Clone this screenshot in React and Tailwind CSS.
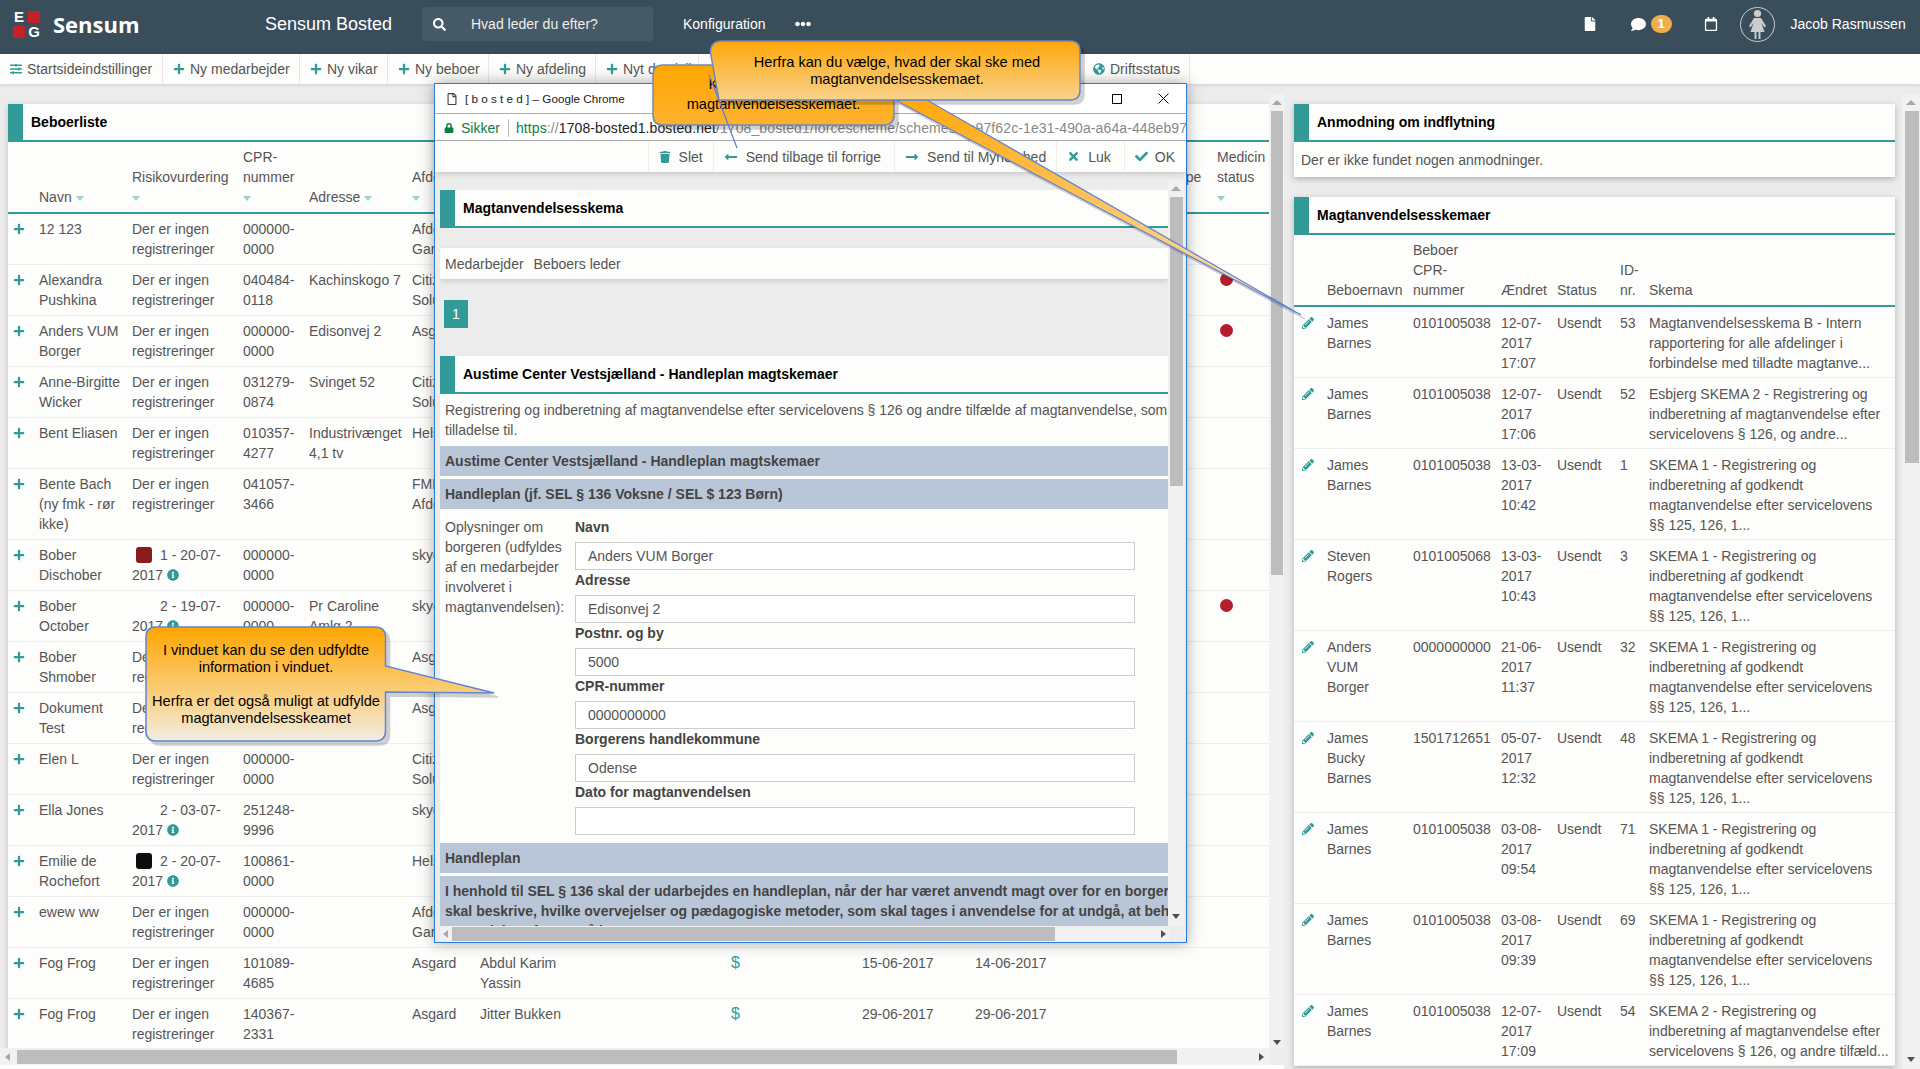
import {
  FaPlus, FaSearch, FaFile, FaComment, FaRegCalendar, FaPencilAlt, FaTrash, FaLongArrowAltLeft,
  FaLongArrowAltRight, FaTimes, FaCheck, FaGlobeAmericas, FaInfoCircle, FaSlidersH,
  FaLock, FaEllipsisH, FaRegFile,
} from 'react-icons/fa';

const NONE = 'Der er ingen registreringer';

const residents = [
  { name: '12 123', risk: NONE, cpr: '000000-0000', addr: '', dep: 'Afdeling Gartneriet' },
  { name: 'Alexandra Pushkina', risk: NONE, cpr: '040484-0118', addr: 'Kachinskogo 7', dep: 'Citizen Solutions', dot: true },
  { name: 'Anders VUM Borger', risk: NONE, cpr: '000000-0000', addr: 'Edisonvej 2', dep: 'Asgard', dot: true },
  { name: 'Anne-Birgitte Wicker', risk: NONE, cpr: '031279-0874', addr: 'Svinget 52', dep: 'Citizen Solutions' },
  { name: 'Bent Eliasen', risk: NONE, cpr: '010357-4277', addr: 'Industrivænget 4,1 tv', dep: 'Helsingør' },
  { name: 'Bente Bach (ny fmk - rør ikke)', risk: NONE, cpr: '041057-3466', addr: '', dep: 'FMK Afdeling' },
  { name: 'Bober Dischober', level: '1 - 20-07-2017', square: 'bg-[#8a1c20]', cpr: '000000-0000', addr: '', dep: 'skyen' },
  { name: 'Bober October', level: '2 - 19-07-2017', square: 'bg-transparent', cpr: '000000-0000', addr: 'Pr Caroline Amlg 2', dep: 'skyen', dot: true },
  { name: 'Bober Shmober', risk: NONE, cpr: '000000-0000', addr: '', dep: 'Asgard' },
  { name: 'Dokument Test', risk: NONE, cpr: '000000-0000', addr: '', dep: 'Asgard' },
  { name: 'Elen L', risk: NONE, cpr: '000000-0000', addr: '', dep: 'Citizen Solutions' },
  { name: 'Ella Jones', level: '2 - 03-07-2017', square: 'bg-transparent', cpr: '251248-9996', addr: '', dep: 'skyen' },
  { name: 'Emilie de Rochefort', level: '2 - 20-07-2017', square: 'bg-[#0c0c0c]', cpr: '100861-0000', addr: '', dep: 'Helsingør' },
  { name: 'ewew ww', risk: NONE, cpr: '000000-0000', addr: '', dep: 'Afdeling Gartneriet' },
  { name: 'Fog Frog', risk: NONE, cpr: '101089-4685', addr: '', dep: 'Asgard', contact: 'Abdul Karim Yassin', from: '15-06-2017', to: '14-06-2017' },
  { name: 'Fog Frog', risk: NONE, cpr: '140367-2331', addr: '', dep: 'Asgard', contact: 'Jitter Bukken', from: '29-06-2017', to: '29-06-2017' },
];

const SKEMA1 = 'SKEMA 1 - Registrering og indberetning af godkendt magtanvendelse efter servicelovens §§ 125, 126, 1...';

const schemes = [
  { name: 'James Barnes', cpr: '0101005038', date: '12-07-2017 17:07', id: 53, text: 'Magtanvendelsesskema B - Intern rapportering for alle afdelinger i forbindelse med tilladte magtanve...' },
  { name: 'James Barnes', cpr: '0101005038', date: '12-07-2017 17:06', id: 52, text: 'Esbjerg SKEMA 2 - Registrering og indberetning af magtanvendelse efter servicelovens § 126, og andre...' },
  { name: 'James Barnes', cpr: '0101005038', date: '13-03-2017 10:42', id: 1, text: SKEMA1 },
  { name: 'Steven Rogers', cpr: '0101005068', date: '13-03-2017 10:43', id: 3, text: SKEMA1 },
  { name: 'Anders VUM Borger', cpr: '0000000000', date: '21-06-2017 11:37', id: 32, text: SKEMA1 },
  { name: 'James Bucky Barnes', cpr: '1501712651', date: '05-07-2017 12:32', id: 48, text: SKEMA1 },
  { name: 'James Barnes', cpr: '0101005038', date: '03-08-2017 09:54', id: 71, text: SKEMA1 },
  { name: 'James Barnes', cpr: '0101005038', date: '03-08-2017 09:39', id: 69, text: SKEMA1 },
  { name: 'James Barnes', cpr: '0101005038', date: '12-07-2017 17:09', id: 54, text: 'SKEMA 2 - Registrering og indberetning af magtanvendelse efter servicelovens § 126, og andre tilfæld...' },
];

const formFields = [
  ['Navn', 'Anders VUM Borger'],
  ['Adresse', 'Edisonvej 2'],
  ['Postnr. og by', '5000'],
  ['CPR-nummer', '0000000000'],
  ['Borgerens handlekommune', 'Odense'],
  ['Dato for magtanvendelsen', ''],
];

function Caret() {
  return <span className="inline-block align-middle w-0 h-0 border-x-[4px] border-x-transparent border-t-[5px] border-t-[#9bcfce]" />;
}

function PanelHead({ title }) {
  return (
    <div className="flex h-[38px] bg-[#fdfdfb] border-b-[2px] border-[#329b98]">
      <div className="w-[15px] h-[38px] bg-[#329b98] shrink-0" />
      <div className="pl-[8px] leading-[36px] font-bold text-black">{title}</div>
    </div>
  );
}

function ToolButton({ icon, children, width }) {
  return (
    <div className={`flex items-center gap-[5px] pl-[10px] h-[30px] border-r border-[#e8e8e6] whitespace-nowrap [&>svg]:shrink-0 ${width}`}>
      {icon}
      <span>{children}</span>
    </div>
  );
}

function ModalButton({ icon, children, className }) {
  return (
    <div className={`flex items-center h-[30px] pl-[10px] border-l border-[#ececea] whitespace-nowrap ${className}`}>
      {icon}
      <span>{children}</span>
    </div>
  );
}

function ScrollV({ thumb, top, className, bottom }) {
  return (
    <div className={`relative flex flex-col bg-[#f1f1f1] ${className}`}>
      <div className={`flex justify-center items-center shrink-0 ${top}`}>
        <span className="w-0 h-0 border-x-[5px] border-x-transparent border-b-[5px] border-b-[#a8a8a8]" />
      </div>
      <div className={`bg-[#bdbdbd] ml-[2px] mr-[1px] ${thumb}`} />
      <div className={`absolute left-0 right-0 flex justify-center ${bottom}`}>
        <span className="w-0 h-0 border-x-[4px] border-x-transparent border-t-[5px] border-t-[#505050]" />
      </div>
    </div>
  );
}

function Callouts() {
  return (
    <div className="absolute left-0 top-0 z-30 w-[1920px] h-[1069px] pointer-events-none text-[14.6px]">
      <svg className="absolute left-0 top-0 w-[1920px] h-[1069px] drop-shadow-[4px_4px_0_rgba(0,0,0,0.18)]" viewBox="0 0 1920 1069">
        <defs>
          <linearGradient id="c2" gradientUnits="userSpaceOnUse" x1="0" y1="65" x2="0" y2="125">
            <stop offset="0" stopColor="#ffa600" />
            <stop offset="1" stopColor="#fdb22f" />
          </linearGradient>
          <linearGradient id="t1" gradientUnits="userSpaceOnUse" x1="0" y1="100" x2="0" y2="315">
            <stop offset="0" stopColor="#ffa80a" />
            <stop offset="1" stopColor="#fbe3b8" />
          </linearGradient>
          <linearGradient id="b1" gradientUnits="userSpaceOnUse" x1="0" y1="41" x2="0" y2="100">
            <stop offset="0" stopColor="#ffa70a" />
            <stop offset="1" stopColor="#f8d28c" />
          </linearGradient>
          <linearGradient id="c3" gradientUnits="userSpaceOnUse" x1="0" y1="627" x2="0" y2="741">
            <stop offset="0" stopColor="#ffa500" />
            <stop offset="0.62" stopColor="#f9d184" />
            <stop offset="1" stopColor="#f1ede4" />
          </linearGradient>
        </defs>
        <path
          d="M156,627 H375 Q385.5,627 385.5,637 V666 L494,693 L385.5,692 V731 Q385.5,741 375,741 H156 Q146,741 146,731 V637 Q146,627 156,627 Z"
          fill="url(#c3)" stroke="#5f86d6" strokeWidth="1.5"
        />
        <path d="M663,65 H884 Q894,65 894,75 V115 Q894,125 884,125 H663 Q653,125 653,115 V75 Q653,65 663,65 Z" fill="url(#c2)" stroke="#7288b8" strokeWidth="1.5" />
      </svg>
      <div className="absolute left-[653px] top-[74px] w-[241px] text-center text-black">
        Klik her for at sende
        <br />
        magtanvendelsesskemaet.
      </div>
      <svg className="absolute left-0 top-0 w-[1920px] h-[1069px]" viewBox="0 0 1920 1069">
        <path d="M709,75 L737,148 L716,92 Z" fill="#fbe3b8" stroke="#5f7fd6" strokeWidth="1" />
      </svg>
      <svg className="absolute left-0 top-0 w-[1920px] h-[1069px] drop-shadow-[4px_4px_0_rgba(0,0,0,0.18)]" viewBox="0 0 1920 1069">
        <path d="M895,100 L1301,315 L927,100 Z" fill="url(#t1)" stroke="#5f7fd6" strokeWidth="1.2" />
        <path d="M722,41 H1070 Q1080,41 1080,51 V90 Q1080,100 1070,100 H719 L710.5,53 Q710,41 722,41 Z" fill="url(#b1)" stroke="#6d86c8" strokeWidth="1.5" />
      </svg>
      <div className="absolute left-[714px] top-[54px] w-[366px] leading-[17px] text-center text-black">
        Herfra kan du vælge, hvad der skal ske med
        <br />
        magtanvendelsesskemaet.
      </div>
      <div className="absolute left-[146px] top-[642px] w-[240px] leading-[17px] text-center text-black">
        I vinduet kan du se den udfyldte
        <br />
        information i vinduet.
        <br />
        <br />
        Herfra er det også muligt at udfylde
        <br />
        magtanvendelsesskeamet
      </div>
    </div>
  );
}

function Modal() {
  return (
    <div className="absolute z-20 left-[434px] top-[83px] w-[753px] h-[860px] flex flex-col border border-[#2b7cd3] bg-[#ececec] shadow-[0_0_14px_rgba(0,0,0,0.35)]">
      <div className="flex items-center h-[30px] shrink-0 bg-white border-b border-[#aeaeae] text-[11.7px] text-[#222]">
        <FaRegFile className="ml-[11px] text-[12px] text-[#444]" />
        <span className="ml-[7px]">[ b o s t e d ] – Google Chrome</span>
        <span className="ml-auto w-[10px] h-[10px] border border-black" />
        <svg className="ml-[36px] mr-[17px] w-[11px] h-[11px]" viewBox="0 0 11 11">
          <path d="M0.5,0.5 L10.5,10.5 M10.5,0.5 L0.5,10.5" stroke="#000" strokeWidth="1" fill="none" />
        </svg>
      </div>
      <div className="flex items-center h-[27px] pt-[1px] shrink-0 bg-white border-b border-[#aeaeae] overflow-hidden whitespace-nowrap">
        <FaLock className="ml-[9px] text-[10px] text-[#0b8043] shrink-0" />
        <span className="ml-[7px] text-[#0b8043]">Sikker</span>
        <span className="ml-[8px] w-px h-[18px] bg-[#bbb] shrink-0" />
        <span className="ml-[7px] text-[#888] tracking-[0.1px]">
          <span className="text-[#0b8043]">https</span>://<span className="text-[#222]">1708-bosted1.bosted.net</span>
          /1708_bosted1/forcescheme/schemes/1a97f62c-1e31-490a-a64a-448eb979c3
        </span>
      </div>
      <div className="relative z-10 flex justify-end items-center h-[31px] shrink-0 bg-[#fdfdfb] shadow-[0_2px_5px_rgba(0,0,0,0.15)] pr-[1px]">
        <ModalButton className="gap-[8px] pr-[10px]" icon={<FaTrash className="text-[12px] text-[#329b98]" />}>Slet</ModalButton>
        <ModalButton className="gap-[8px] pr-[13px]" icon={<FaLongArrowAltLeft className="text-[14px] text-[#329b98]" />}>Send tilbage til forrige</ModalButton>
        <ModalButton className="gap-[8px] pr-[10px]" icon={<FaLongArrowAltRight className="text-[14px] text-[#329b98]" />}>Send til Myndighed</ModalButton>
        <ModalButton className="gap-[8px] pr-[13px]" icon={<FaTimes className="text-[13px] text-[#329b98]" />}>Luk</ModalButton>
        <ModalButton className="gap-[7px] pr-[10px]" icon={<FaCheck className="text-[13px] text-[#329b98]" />}>OK</ModalButton>
      </div>
      <div className="flex flex-1 min-h-0 pl-[5px]">
        <div className="w-[728px] overflow-hidden pt-[18px]">
          <PanelHead title="Magtanvendelsesskema" />
          <div className="mt-[20px] flex gap-[10px] h-[31px] pl-[5px] items-center bg-[#fdfdfb] shadow-[0_2px_5px_rgba(0,0,0,0.15)]">
            <span>Medarbejder</span>
            <span>Beboers leder</span>
          </div>
          <div className="mt-[21px] ml-[4px] w-[24px] h-[28px] flex items-center justify-center bg-[#329b98] text-white">1</div>
          <div className="mt-[28px]">
            <PanelHead title="Austime Center Vestsjælland - Handleplan magtskemaer" />
          </div>
          <div className="h-[52px] bg-[#fdfdfb] pl-[5px] pt-[6px] whitespace-nowrap overflow-hidden">
            Registrering og indberetning af magtanvendelse efter servicelovens § 126 og andre tilfælde af magtanvendelse, som
            <br />
            tilladelse til.
          </div>
          <div className="bg-[#fdfdfb]">
            <div className="h-[30px] leading-[30px] pl-[5px] bg-[#b9c6d8] font-bold text-[#444]">Austime Center Vestsjælland - Handleplan magtskemaer</div>
            <div className="mt-[3px] h-[30px] leading-[30px] pl-[5px] bg-[#b9c6d8] font-bold text-[#444]">Handleplan (jf. SEL § 136 Voksne / SEL $ 123 Børn)</div>
            <div className="flex h-[334px] pt-[8px]">
              <div className="w-[135px] shrink-0 pl-[5px] pr-[4px]">Oplysninger om borgeren (udfyldes af en medarbejder involveret i magtanvendelsen):</div>
              <div className="w-[560px]">
                {formFields.map(([label, value]) => (
                  <div key={label}>
                    <div className="font-bold text-[#444]">{label}</div>
                    <div className="mt-[5px] h-[28px] leading-[26px] border border-[#ccc] bg-white pl-[12px]">{value}</div>
                  </div>
                ))}
              </div>
            </div>
            <div className="h-[30px] leading-[30px] pl-[5px] bg-[#b9c6d8] font-bold text-[#444]">Handleplan</div>
            <div className="mt-[3px] h-[60px] pt-[5px] pl-[5px] bg-[#b9c6d8] font-bold text-[#444] whitespace-nowrap overflow-hidden">
              I henhold til SEL § 136 skal der udarbejdes en handleplan, når der har været anvendt magt over for en borger. Her
              <br />
              skal beskrive, hvilke overvejelser og pædagogiske metoder, som skal tages i anvendelse for at undgå, at behov
              <br />
              anvendelse af magt på borgeren.
            </div>
          </div>
        </div>
        <ScrollV className="w-[16px] mt-[8px]" top="h-[17px]" thumb="h-[289px]" bottom="bottom-[7px]" />
      </div>
      <div className="relative flex items-center h-[16px] shrink-0 ml-[5px] mr-[17px] bg-[#f1f1f1]">
        <span className="ml-[3px] w-0 h-0 border-y-[4px] border-y-transparent border-r-[5px] border-r-[#a8a8a8]" />
        <div className="ml-[4px] w-[603px] h-[14px] bg-[#bdbdbd]" />
        <span className="ml-auto mr-[3px] w-0 h-0 border-y-[4px] border-y-transparent border-l-[5px] border-l-[#505050]" />
      </div>
    </div>
  );
}

function ResidentTable() {
  return (
    <table className="table-fixed w-[1261px] bg-[#fdfdfb]">
      <colgroup>
        <col className="w-[26px]" />
        <col className="w-[93px]" />
        <col className="w-[111px]" />
        <col className="w-[66px]" />
        <col className="w-[103px]" />
        <col className="w-[68px]" />
        <col className="w-[251px]" />
        <col className="w-[131px]" />
        <col className="w-[113px]" />
        <col className="w-[196px]" />
        <col className="w-[46px]" />
        <col className="w-[57px]" />
      </colgroup>
      <thead>
        <tr className="border-b-[2px] border-[#329b98]">
          {['', 'Navn', 'Risikovurdering', 'CPR-nummer', 'Adresse', 'Afdeling', 'Kontaktperson', 'Økonomi', 'Fra', 'Til', 'Type', 'Medicin status'].map((h, i) => (
            <th key={i} className="p-[5px] text-left align-bottom font-normal">
              {h} {h && <Caret />}
            </th>
          ))}
        </tr>
      </thead>
      <tbody>
        {residents.map((r, i) => (
          <tr key={i} className="border-b border-[#eeeeec] align-top">
            <td className="p-[5px] pt-[9px]"><FaPlus className="text-[12px] text-[#329b98]" /></td>
            <td className="p-[5px]">{r.name}</td>
            <td className="p-[5px]">
              {r.risk ? r.risk : (
                <>
                  <span className={`inline-block align-[-3px] w-[16px] h-[16px] ml-[4px] mr-[8px] rounded-[3px] ${r.square}`} />
                  {r.level} <FaInfoCircle className="inline align-[-1px] text-[12px] text-[#329b98]" />
                </>
              )}
            </td>
            <td className="p-[5px]">{r.cpr}</td>
            <td className="p-[5px]">{r.addr}</td>
            <td className="p-[5px]">{r.dep}</td>
            <td className="p-[5px]"><div className="max-w-[100px]">{r.contact}</div></td>
            <td className="p-[5px] text-[16px] text-[#329b98]">{r.contact && '$'}</td>
            <td className="p-[5px]">{r.from}</td>
            <td className="p-[5px]">{r.to}</td>
            <td className="p-[5px]" />
            <td className="p-[5px]">{r.dot && <span className="block ml-[3px] mt-[3px] w-[13px] h-[13px] rounded-full bg-[#b71c2c]" />}</td>
          </tr>
        ))}
      </tbody>
    </table>
  );
}

function SchemeTable() {
  return (
    <table className="table-fixed w-[601px] bg-[#fdfdfb]">
      <colgroup>
        <col className="w-[28px]" />
        <col className="w-[86px]" />
        <col className="w-[88px]" />
        <col className="w-[56px]" />
        <col className="w-[63px]" />
        <col className="w-[29px]" />
        <col className="w-[251px]" />
      </colgroup>
      <thead>
        <tr className="border-b-[2px] border-[#329b98]">
          {['', 'Beboernavn', 'Beboer CPR-nummer', 'Ændret', 'Status', 'ID-nr.', 'Skema'].map((h, i) => (
            <th key={i} className="p-[5px] text-left align-bottom font-normal">{h}</th>
          ))}
        </tr>
      </thead>
      <tbody>
        {schemes.map((s, i) => (
          <tr key={i} className="border-b border-[#eeeeec] align-top">
            <td className="pl-[8px] pt-[10px]"><FaPencilAlt className="text-[12px] text-[#329b98]" /></td>
            <td className="px-[5px] pt-[6px] pb-[4px]">{s.name}</td>
            <td className="px-[5px] pt-[6px] pb-[4px]">{s.cpr}</td>
            <td className="px-[5px] pt-[6px] pb-[4px]">{s.date}</td>
            <td className="px-[5px] pt-[6px] pb-[4px]">Usendt</td>
            <td className="px-[5px] pt-[6px] pb-[4px]">{s.id}</td>
            <td className="px-[5px] pt-[6px] pb-[4px]">{s.text}</td>
          </tr>
        ))}
      </tbody>
    </table>
  );
}

export default function App() {
  return (
    <div className="relative w-[1920px] h-[1069px] overflow-hidden flex flex-col bg-[#ececec] font-['Liberation_Sans',Arial,sans-serif] text-[14px] leading-[20px] text-[#555]">
      {/* topbar */}
      <header className="flex items-center h-[54px] pb-[6px] shrink-0 bg-[#394d5a] text-white">
        <div className="ml-[13px] grid grid-cols-2 gap-[3px] w-[27px] font-bold text-[15px] leading-[12px] text-center">
          <span className="h-[12px]">E</span>
          <span className="h-[12px] bg-[#c8202b]" />
          <span className="h-[12px] bg-[#c8202b]" />
          <span className="h-[12px]">G</span>
        </div>
        <span className="ml-[13px] w-[212px] font-['Open_Sans',sans-serif] font-bold text-[22px]">Sensum</span>
        <span className="text-[18px] w-[157px]">Sensum Bosted</span>
        <div className="flex items-center w-[231px] h-[34px] rounded-[3px] bg-[#455a66]">
          <FaSearch className="ml-[11px] text-[13px]" />
          <span className="ml-[25px] text-[#eee]">Hvad leder du efter?</span>
        </div>
        <span className="ml-[30px]">Konfiguration</span>
        <FaEllipsisH className="ml-[29px] text-[16px]" />
        <FaFile className="ml-[772px] text-[14px]" />
        <FaComment className="ml-[34px] text-[15px]" />
        <span className="ml-[5px] w-[21px] h-[18px] rounded-full bg-[#f0ad4e] text-center text-[13px] leading-[18px] font-bold">1</span>
        <FaRegCalendar className="ml-[32px] text-[14px]" />
        <svg className="ml-[22px] w-[35px] h-[35px]" viewBox="0 0 35 35">
          <circle cx="17.5" cy="17.5" r="17" fill="none" stroke="#ccc" strokeWidth="1" />
          <circle cx="17.5" cy="6.5" r="3.6" fill="#ccc" />
          <path d="M14,11 H21 L26,19 L24.5,20.5 L21.5,16 L24.5,25 H20.5 V32 H18.5 V25 H16.5 V32 H14.5 V25 H10.5 L13.5,16 L10.5,20.5 L9,19 Z" fill="#ccc" />
        </svg>
        <span className="ml-[16px]">Jacob Rasmussen</span>
      </header>

      {/* toolbar */}
      <nav className="relative z-10 flex items-center h-[30px] shrink-0 bg-[#fdfdfb] shadow-[0_1px_4px_rgba(0,0,0,0.12)]">
        <ToolButton width="w-[163px]" icon={<FaSlidersH className="text-[12px] text-[#329b98]" />}>Startsideindstillinger</ToolButton>
        <ToolButton width="w-[137px]" icon={<FaPlus className="text-[12px] text-[#329b98]" />}>Ny medarbejder</ToolButton>
        <ToolButton width="w-[88px]" icon={<FaPlus className="text-[12px] text-[#329b98]" />}>Ny vikar</ToolButton>
        <ToolButton width="w-[101px]" icon={<FaPlus className="text-[12px] text-[#329b98]" />}>Ny beboer</ToolButton>
        <ToolButton width="w-[107px]" icon={<FaPlus className="text-[12px] text-[#329b98]" />}>Ny afdeling</ToolButton>
        <ToolButton width="w-[103px]" icon={<FaPlus className="text-[12px] text-[#329b98]" />}>Nyt domicil</ToolButton>
        <div className="w-[384px]" />
        <ToolButton width="w-[107px]" icon={<FaGlobeAmericas className="text-[12px] text-[#329b98]" />}>Driftsstatus</ToolButton>
      </nav>

      {/* body */}
      <div className="flex flex-1 min-h-0">
        <div className="flex flex-col w-[1284px] shrink-0">
          <div className="flex flex-1 min-h-0">
            <div className="w-[1269px] shrink-0 overflow-hidden pl-[8px] pt-[20px]">
              <div className="shadow-[0_2px_6px_rgba(0,0,0,0.2)]">
                <PanelHead title="Beboerliste" />
                <ResidentTable />
              </div>
            </div>
            <ScrollV className="w-[15px] mt-[10px]" top="h-[17px]" thumb="h-[464px]" bottom="bottom-[3px]" />
          </div>
          <div className="flex items-center h-[17px] w-[1271px] bg-[#f1f1f1] shrink-0">
            <span className="ml-[5px] w-0 h-0 border-y-[4px] border-y-transparent border-r-[5px] border-r-[#a8a8a8]" />
            <div className="ml-[7px] w-[1160px] h-[14px] bg-[#bdbdbd]" />
            <span className="ml-auto mr-[7px] w-0 h-0 border-y-[4px] border-y-transparent border-l-[5px] border-l-[#505050]" />
          </div>
          <div className="h-[4px] shrink-0 bg-white" />
        </div>
        <div className="w-[618px] shrink-0 overflow-hidden pl-[10px] pr-[7px] pt-[20px]">
          <div className="shadow-[0_2px_6px_rgba(0,0,0,0.25)]">
            <PanelHead title="Anmodning om indflytning" />
            <div className="h-[35px] bg-[#fdfdfb] pl-[7px] pt-[8px]">Der er ikke fundet nogen anmodninger.</div>
          </div>
          <div className="mt-[20px] shadow-[0_2px_6px_rgba(0,0,0,0.25)]">
            <PanelHead title="Magtanvendelsesskemaer" />
            <SchemeTable />
          </div>
        </div>
        <ScrollV className="w-[18px] mt-[10px]" top="h-[17px]" thumb="h-[352px] ml-[3px] mr-0" bottom="bottom-[7px]" />
      </div>

      <Modal />
      <Callouts />
    </div>
  );
}
